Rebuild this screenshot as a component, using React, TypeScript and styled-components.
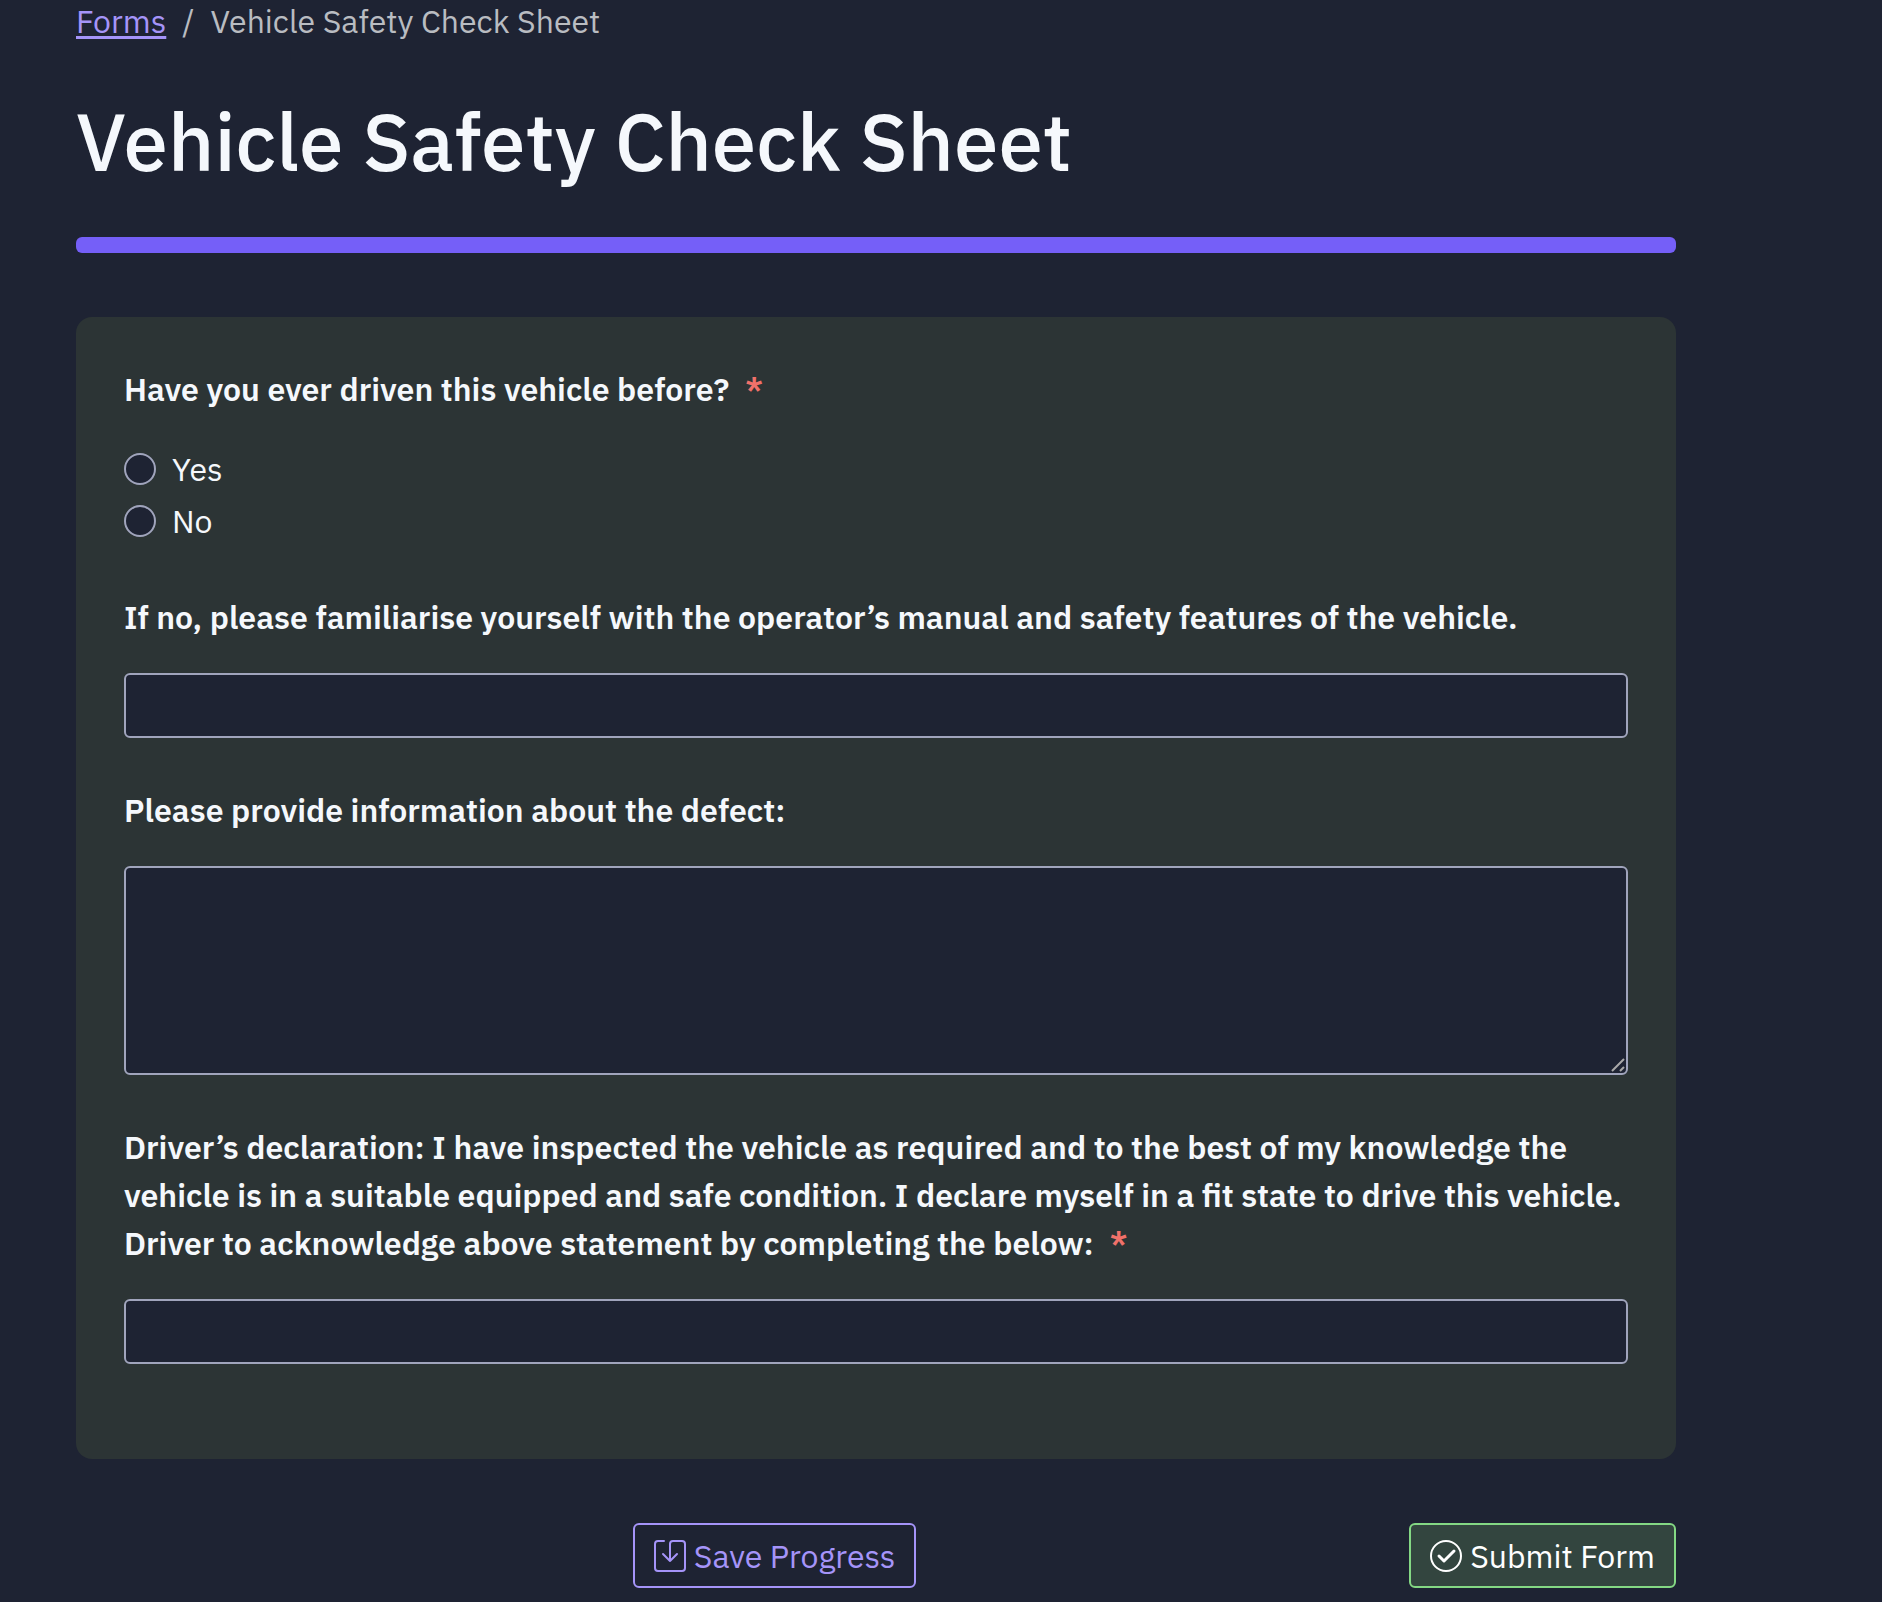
import React from "react";
import styled, { createGlobalStyle, css } from "styled-components";

const color = {
  page: "#1e2333",
  card: "#2c3435",
  text: "#f5f8fc",
  muted: "#b9bcc1",
  accent: "#755ff8",
  link: "#a594f9",
  border: "#a0a4bc",
  danger: "#f0716a",
  success: "#84d884",
  successFill: "#33453f",
};

const GlobalStyle = createGlobalStyle`
  *, *::before, *::after { box-sizing: border-box; }
  body {
    margin: 0;
    background: ${color.page};
    color: ${color.text};
    font-family: "IBM Plex Sans", Roboto, "Noto Sans", sans-serif;
    font-size: 32px;
    line-height: 48px;
  }
`;

const Page = styled.main`
  max-width: 1676px;
  padding-left: 76px;
`;

const Breadcrumb = styled.nav`
  display: flex;
  gap: 16px;
  line-height: 42px;
  color: ${color.muted};
`;

const CrumbLink = styled.a`
  color: ${color.link};
  text-decoration: underline;
  text-decoration-thickness: 3px;
  text-underline-offset: 3px;
`;

const Title = styled.h1`
  margin: 49px 0 46px;
  font-size: 80px;
  line-height: 100px;
  font-weight: 500;
`;

const Divider = styled.hr`
  height: 16px;
  margin: 0 0 64px;
  border: 0;
  border-radius: 6px;
  background: ${color.accent};
`;

const Card = styled.section`
  display: flex;
  flex-direction: column;
  gap: 48px;
  padding: 48px 48px 95px;
  border-radius: 16px;
  background: ${color.card};
`;

const Field = styled.div`
  display: flex;
  flex-direction: column;
  gap: 32px;
`;

const RadioGroup = styled.fieldset`
  min-width: 0;
  margin: 0;
  padding: 0;
  border: 0;
`;

const labelText = css`
  font-weight: 600;
`;

const Label = styled.label`
  ${labelText}
`;

const Legend = styled.legend`
  ${labelText}
  padding: 0;
  margin-bottom: 32px;
`;

const Star = styled.span`
  margin-left: 16px;
  color: ${color.danger};
`;

const Options = styled.div`
  display: flex;
  flex-direction: column;
  align-items: flex-start;
  gap: 4px;
`;

const Option = styled.label`
  display: flex;
  align-items: center;
  gap: 16px;
`;

const Radio = styled.input`
  appearance: none;
  width: 32px;
  height: 32px;
  margin: 0;
  border: 2px solid ${color.border};
  border-radius: 50%;
  background: ${color.page};
  &:checked { border-color: ${color.accent}; background: ${color.accent}; }
`;

const control = css`
  display: block;
  width: 100%;
  margin: 0;
  padding: 8px 16px;
  border: 2px solid ${color.border};
  border-radius: 6px;
  background: ${color.page};
  color: ${color.text};
  font: inherit;
`;

const TextInput = styled.input`
  ${control}
  height: 65px;
`;

const TextArea = styled.textarea`
  ${control}
  height: 209px;
  resize: none;
`;

const AreaWrap = styled.div`
  position: relative;
`;

const Grip = styled.svg`
  position: absolute;
  right: 3px;
  bottom: 3px;
  pointer-events: none;
`;

const Actions = styled.footer`
  display: flex;
  justify-content: space-between;
  margin-top: 64px;
  padding-bottom: 14px;
`;

const EmptySlot = styled.div`
  width: 64px;
`;

const Button = styled.button<{ $tone: "outline" | "success" }>`
  display: flex;
  align-items: center;
  gap: 8px;
  height: 65px;
  padding: 0 19px;
  border: 2px solid ${(p) => (p.$tone === "success" ? color.success : color.link)};
  border-radius: 6px;
  background: ${(p) => (p.$tone === "success" ? color.successFill : "transparent")};
  color: ${(p) => (p.$tone === "success" ? "#ffffff" : color.link)};
  font: inherit;
  cursor: pointer;
`;

const Icon = styled.svg`
  flex: none;
  width: 32px;
  height: 32px;
  fill: none;
  stroke: currentColor;
  stroke-linecap: round;
  stroke-linejoin: round;
`;

const Required = () => <Star aria-hidden="true">*</Star>;

export default function App() {
  return (
    <>
      <GlobalStyle />
      <Page>
        <Breadcrumb aria-label="Breadcrumb">
          <CrumbLink href="#forms">Forms</CrumbLink>
          <span>/</span>
          <span>Vehicle Safety Check Sheet</span>
        </Breadcrumb>
        <Title>Vehicle Safety Check Sheet</Title>
        <Divider />
        <form onSubmit={(e) => e.preventDefault()}>
          <Card>
            <RadioGroup>
              <Legend>Have you ever driven this vehicle before?<Required /></Legend>
              <Options>
                {["Yes", "No"].map((o) => (
                  <Option key={o}>
                    <Radio type="radio" name="driven" value={o} />
                    {o}
                  </Option>
                ))}
              </Options>
            </RadioGroup>
            <Field>
              <Label htmlFor="manual">
                If no, please familiarise yourself with the operator’s manual and safety features of the vehicle.
              </Label>
              <TextInput id="manual" type="text" />
            </Field>
            <Field>
              <Label htmlFor="defect">Please provide information about the defect:</Label>
              <AreaWrap>
                <TextArea id="defect" />
                <Grip width="14" height="14" viewBox="0 0 14 14" stroke="#a8a8a8" strokeWidth="2" aria-hidden="true">
                  <path d="M1 13L13 1M9 13L13 9" />
                </Grip>
              </AreaWrap>
            </Field>
            <Field>
              <Label htmlFor="declaration">
                Driver’s declaration: I have inspected the vehicle as required and to the best of my knowledge the
                vehicle is in a suitable equipped and safe condition. I declare myself in a fit state to drive this
                vehicle. Driver to acknowledge above statement by completing the below:
                <Required />
              </Label>
              <TextInput id="declaration" type="text" />
            </Field>
          </Card>
          <Actions>
            <EmptySlot />
            <Button type="button" $tone="outline">
              <Icon viewBox="0 0 32 32" strokeWidth="2" aria-hidden="true">
                <path d="M10 1H4Q1 1 1 4V28Q1 31 4 31H28Q31 31 31 28V4Q31 1 28 1H19Q16 1 16 4V21M9 14L16 21L23 14" />
              </Icon>
              Save Progress
            </Button>
            <Button type="submit" $tone="success">
              <Icon viewBox="0 0 32 32" strokeWidth="2" aria-hidden="true">
                <circle cx="16" cy="16" r="15" />
                <path d="M9 16L14 21L24 11" strokeWidth="3" />
              </Icon>
              Submit Form
            </Button>
          </Actions>
        </form>
      </Page>
    </>
  );
}
